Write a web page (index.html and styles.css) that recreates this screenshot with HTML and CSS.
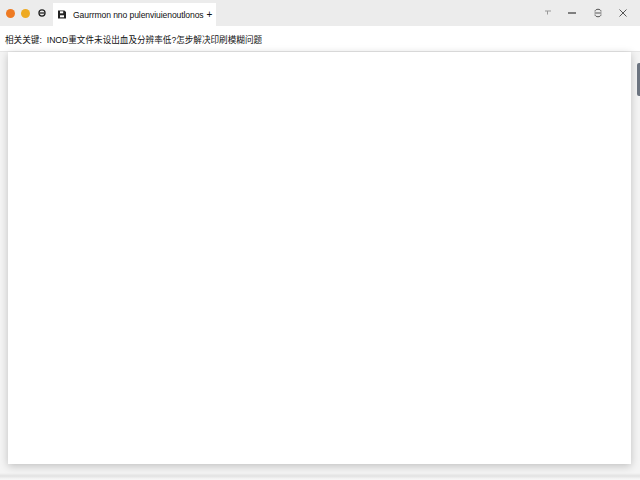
FILE: index.html
```html
<!DOCTYPE html>
<html lang="zh">

<head>
    <meta charset="UTF-8">
    <title>Browser window</title>
    <link rel="stylesheet" href="styles.css">
</head>

<body>
    <div class="titlebar">
        <span class="dot dot-red"></span>
        <span class="dot dot-yellow"></span>
        <svg class="round-icon" width="8" height="8" viewBox="0 0 10 10">
            <circle cx="5" cy="5" r="3.8" fill="none" stroke="#222" stroke-width="1.6"/>
            <path d="M2 5h6" stroke="#222" stroke-width="1.6"/>
        </svg>
        <div class="tab">
            <svg class="tab-icon" width="8" height="9" viewBox="0 0 10 10">
                <path d="M0 0h8l2 2v8H0z" fill="#222"/>
                <rect x="2.500" y="1" width="4" height="2.500" fill="#fff"/>
                <rect x="2.500" y="6" width="5" height="2.500" fill="#fff"/>
            </svg>
            <span class="tab-title">Gaurrmon nno pulenviuienoutlonos</span>
            <span class="tab-plus">+</span>
        </div>
        <div class="controls">
            <svg width="10" height="10" viewBox="0 0 10 10">
                <path d="M2 3h6M4.500 3v3.500" stroke="#999" stroke-width="1" fill="none"/>
            </svg>
            <svg class="minimize" width="10" height="10" viewBox="0 0 10 10">
                <path d="M1 5h8" stroke="#444" stroke-width="1.300"/>
            </svg>
            <svg width="10" height="10" viewBox="0 0 10 10">
                <path d="M2 3.500C2 0.500 8 0.500 8 3.500M1.500 5h7M2 6.500C2 9.500 8 9.500 8 6.500" stroke="#555" stroke-width="1" fill="none"/>
            </svg>
            <svg width="10" height="10" viewBox="0 0 10 10">
                <path d="M1.500 1.500l7 7M8.500 1.500l-7 7" stroke="#555" stroke-width="1"/>
            </svg>
        </div>
    </div>

    <div class="addressbar">
        <span class="label">相关关键:</span>
        <span class="headline">INOD重文件未设出血及分辨率低?怎步解决印刷模糊问题</span>
    </div>

    <div class="viewport">
        <div class="page"></div>
        <div class="scroll-thumb"></div>
    </div>
</body>

</html>
```

FILE: styles.css
```css
body {
    margin: 0;
    width: 640px;
    height: 480px;
    overflow: hidden;
    display: flex;
    flex-direction: column;
    background-color: #f0f0f0;
    font-family: "Liberation Sans", "Noto Sans CJK SC", sans-serif;
    color: #111;
}

.titlebar {
    height: 26px;
    flex-shrink: 0;
    display: flex;
    align-items: center;
    background-color: #ececec;
    padding-left: 6px;
}

.dot {
    width: 9px;
    height: 9px;
    border-radius: 50%;
    margin-right: 6px;
}

.dot-red {
    background-color: #ee7a22;
}

.dot-yellow {
    background-color: #eeaa22;
}

.round-icon {
    margin-left: 2px;
}

.tab {
    height: 23px;
    margin-left: 7px;
    margin-top: 3px;
    padding: 0 5px;
    width: 163px;
    box-sizing: border-box;
    display: flex;
    align-items: center;
    background-color: #fff;
}

.tab-icon {
    margin-right: 7px;
    flex-shrink: 0;
}

.tab-title {
    font-size: 8.600px;
    white-space: nowrap;
    letter-spacing: -0.100px;
}

.tab-plus {
    font-size: 10px;
    margin-left: 3px;
}

.controls {
    margin-left: auto;
    display: flex;
    align-items: center;
    gap: 15px;
    padding-right: 12px;
}

.minimize {
    margin-left: -1px;
    margin-right: 1px;
}

.addressbar {
    height: 26px;
    flex-shrink: 0;
    display: flex;
    align-items: center;
    padding-left: 5px;
    background-color: #fff;
    border-bottom: 1px solid #e6e6e6;
    box-sizing: border-box;
    font-size: 8.600px;
    white-space: nowrap;
}

.label {
    margin-right: 5px;
}

.viewport {
    flex: 1;
    position: relative;
    display: flex;
    align-items: flex-start;
    background: linear-gradient(#f4f4f4 0, #f4f4f4 421px, #e2e2e2 424px, #f6f6f6 427px);
}

.page {
    width: 623px;
    height: 412px;
    margin-left: 8px;
    background-color: #fff;
    box-shadow: 0 2px 8px rgba(0, 0, 0, 0.22);
}

.scroll-thumb {
    position: absolute;
    right: 0;
    top: 11px;
    width: 3px;
    height: 33px;
    border-radius: 2px 0 0 2px;
    background-color: #6c7480;
}
```
